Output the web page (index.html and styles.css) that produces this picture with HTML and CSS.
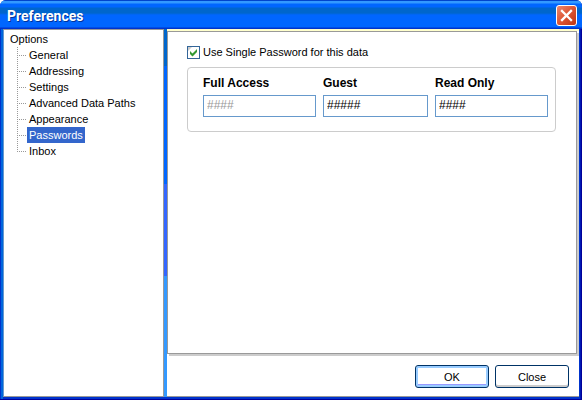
FILE: index.html
```html
<!DOCTYPE html>
<html lang="en">
<head>
    <meta charset="utf-8">
    <title>Preferences</title>
    <meta name="viewport" content="width=device-width, initial-scale=1.0">
    <link rel="stylesheet" href="styles.css">
</head>
<body>
    <div class="window">
        <header class="titlebar">
            <h1>Preferences</h1>
            <button class="close-x" type="button" aria-label="Close window">
                <svg width="21" height="21" viewBox="0 0 21 21">
                    <defs>
                        <linearGradient id="red" x1="0" y1="0" x2="1" y2="1">
                            <stop offset="0" stop-color="#ee8a70"/>
                            <stop offset="0.5" stop-color="#dd5533"/>
                            <stop offset="1" stop-color="#bb3311"/>
                        </linearGradient>
                    </defs>
                    <rect x="0.5" y="0.5" width="20" height="20" rx="2.5" fill="url(#red)" stroke="#fff"/>
                    <path d="M6 6l9 9M15 6l-9 9" stroke="#fff" stroke-width="2.3" stroke-linecap="square"/>
                </svg>
            </button>
        </header>

        <div class="content">
            <nav class="tree">
                <div class="root">Options</div>
                <ul>
                    <li><a href="#general">General</a></li>
                    <li><a href="#addressing">Addressing</a></li>
                    <li><a href="#settings">Settings</a></li>
                    <li><a href="#paths">Advanced Data Paths</a></li>
                    <li><a href="#appearance">Appearance</a></li>
                    <li><a class="selected" href="#passwords">Passwords</a></li>
                    <li><a href="#inbox">Inbox</a></li>
                </ul>
            </nav>
            <div class="splitter"></div>

            <form class="main">
                <div class="panel">
                    <label class="check">
                        <input type="checkbox" checked>
                        <span>Use Single Password for this data</span>
                    </label>
                    <div class="group">
                        <div class="field">
                            <label for="full">Full Access</label>
                            <input id="full" type="text" value="####" disabled>
                        </div>
                        <div class="field">
                            <label for="guest">Guest</label>
                            <input id="guest" type="text" value="#####">
                        </div>
                        <div class="field">
                            <label for="readonly">Read Only</label>
                            <input id="readonly" type="text" value="####">
                        </div>
                    </div>
                </div>
                <div class="footer">
                    <button class="btn default" type="button">OK</button>
                    <button class="btn" type="button">Close</button>
                </div>
            </form>
        </div>
    </div>
</body>
</html>
```
FILE: styles.css
```css
* {
    box-sizing: border-box;
}
body {
    margin: 0;
    background: #fff;
    color: #000;
    font: 11px/16px "Liberation Sans", Arial, sans-serif;
}
input, button {
    font: inherit;
    color: inherit;
    margin: 0;
}
.window {
    display: flex;
    flex-direction: column;
    min-height: 100vh;
    padding: 0 3px 3px;
    border-radius: 6px 6px 0 0;
    background: linear-gradient(90deg, #0033cc 1px, #0066dd 1px, #0066dd 3px, #0033cc 3px, #0033cc calc(100% - 2px), #000099 calc(100% - 1px));
    box-shadow: inset 0 -1px #000099;
}
.titlebar {
    display: flex;
    align-items: center;
    justify-content: space-between;
    height: 29px;
    margin: 0 -3px;
    padding: 2px 5px 0 7px;
    border-radius: 6px 6px 0 0;
    background: linear-gradient(#0044cc 1px, #3399ff 1px, #3399ff 3px, #0066ff 4px, #0066ff 7px, #0066cc 8px, #0066cc 13px, #0066ff 15px, #0066ff 27px, #0033cc 28px);
}
.titlebar h1 {
    margin: 0;
    color: #fff;
    font: bold 14px/20px Roboto, sans-serif;
    text-shadow: 1px 1px #003399;
}
.close-x {
    width: 21px;
    height: 21px;
    padding: 0;
    border: 0;
    background: none;
}
.close-x svg {
    display: block;
}
.content {
    display: flex;
    flex: 1;
    background: #fff;
}
.tree {
    flex: 0 0 161px;
    padding: 1px 0 0 6px;
    border: 1px solid #999;
    border-left-color: #6699cc;
}
.tree ul {
    list-style: none;
    margin: 0 0 0 7px;
    padding: 0;
}
.tree li {
    display: flex;
    height: 16px;
    background:
        repeating-linear-gradient(#999 0 1px, transparent 1px 2px) 0 0 / 1px 100% no-repeat,
        repeating-linear-gradient(90deg, #999 0 1px, transparent 1px 2px) 0 8px / 9px 1px no-repeat;
}
.tree li:last-child {
    background-size: 1px 9px, 9px 1px;
}
.tree a {
    margin-left: 10px;
    padding: 0 2px;
    color: inherit;
    text-decoration: none;
    white-space: nowrap;
}
.tree .selected {
    background: #3366cc;
    color: #fff;
}
.splitter {
    flex: 0 0 3px;
    background: linear-gradient(#0066cc 10%, #0066ff 10%, #0066ff 42%, #3366ff 42%, #3366ff 67%, #3399ff 67%);
}
.main {
    display: flex;
    flex: 1;
    flex-direction: column;
    min-width: 0;
    border-top: 2px solid #ffffcc;
    border-bottom: 1px solid #999;
}
.panel {
    flex: 1;
    margin-right: 2px;
    padding: 12px 20px 0 19px;
    border: 1px solid #999;
    box-shadow: 2px 2px #ccc;
}
.check {
    display: flex;
    align-items: center;
    gap: 3px;
    width: max-content;
}
.check input {
    appearance: none;
    width: 13px;
    height: 13px;
    border: 1px solid #336699;
    background: #fff url("data:image/svg+xml,%3Csvg xmlns='http://www.w3.org/2000/svg' viewBox='0 0 11 11'%3E%3Cpath d='M0 0h4L0 4z' fill='%23ccc'/%3E%3Cpath d='M2 4v3l2.500 2.500L9 5V2L4.500 6.500z' fill='%23339933'/%3E%3C/svg%3E") center / 11px 11px no-repeat;
}
.group {
    display: grid;
    grid-template-columns: 113fr 105fr 113fr;
    gap: 7px;
    margin-top: 7px;
    padding: 7px 7px 14px 15px;
    border: 1px solid #ccc;
    border-radius: 4px;
}
.field label {
    display: block;
    margin-bottom: 4px;
    font-size: 12px;
    font-weight: bold;
}
.field input {
    display: block;
    width: 100%;
    height: 22px;
    padding: 0 3px 2px;
    border: 1px solid #6699cc;
    border-radius: 0;
    background: #fff;
    font-size: 12px;
}
.field input:disabled {
    color: #999;
}
.footer {
    display: flex;
    justify-content: flex-end;
    gap: 6px;
    padding: 11px 10px 8px;
}
.btn {
    width: 74px;
    height: 23px;
    padding: 0;
    border: 1px solid #003366;
    border-radius: 3px;
    background: #fff;
    box-shadow: inset 0 -2px #ccc;
}
.btn.default {
    box-shadow: inset 0 0 0 2px #99ccff, inset 0 -3px #9999ff;
}
```
